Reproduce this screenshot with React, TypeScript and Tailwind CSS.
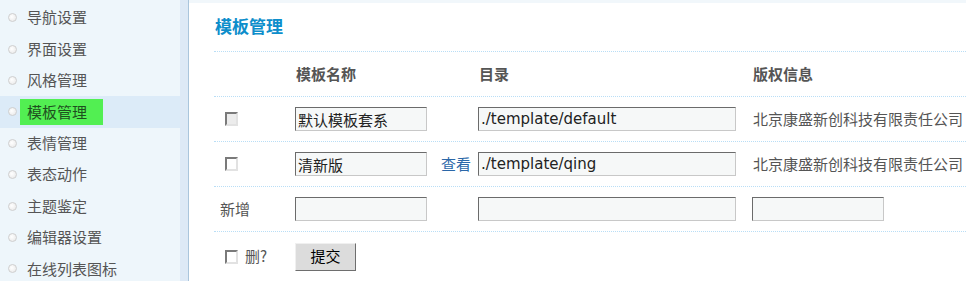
import React from 'react';

const menu = ['导航设置', '界面设置', '风格管理', '模板管理', '表情管理', '表态动作', '主题鉴定', '编辑器设置', '在线列表图标'];

const font = { fontFamily: '"Noto Sans CJK SC", "Liberation Sans", sans-serif' };

const inputCls =
  "h-[24px] bg-[#f6f8f8] border border-t-[#6b6b6b] border-l-[#6b6b6b] border-b-[#c8c8c8] border-r-[#c8c8c8] px-[2px] text-[15px] text-[#222] outline-none [font-family:'DejaVu_Sans','Noto_Sans_CJK_SC',sans-serif]";

const Check: React.FC<{ disabled?: boolean }> = ({ disabled }) => (
  <span
    className={`inline-block w-[13px] h-[14px] border-2 border-t-[#7a7a7a] border-l-[#7a7a7a] border-b-[#e2e2e2] border-r-[#e2e2e2] ${
      disabled ? 'bg-[#ececec]' : 'bg-white'
    }`}
  />
);

const row = 'col-span-5 grid grid-cols-subgrid items-center border-t border-dotted border-[#b9def6]';

const App: React.FC = () => {
  return (
    <div className="flex w-[966px] h-[281px] overflow-hidden bg-white" style={font}>
      <aside className="w-[180px] shrink-0 bg-[#eef6fb] pt-[2px]">
        {menu.map((m) => {
          const active = m === '模板管理';
          return (
            <div
              key={m}
              className={`h-[31.4px] flex items-center ${active ? 'bg-[#dcebf8]' : ''}`}
            >
              <span className="ml-[8px] w-[9px] h-[9px] rounded-full border border-[#cfcfcf] bg-[radial-gradient(circle_at_40%_40%,#ffffff,#e6e6e6)]" />
              {active ? (
                <span className="ml-[3px] h-[26px] w-[83px] bg-[#52ef52] text-[#1f4f1f] text-[15px] flex items-center pl-[7px]">
                  {m}
                </span>
              ) : (
                <span className="ml-[10px] text-[15px] text-[#555]">{m}</span>
              )}
            </div>
          );
        })}
      </aside>
      <div className="w-[9px] shrink-0 bg-[#dde9f6] border-r border-[#aac5dc]" />
      <main className="flex-1 flex flex-col">
        <div className="h-[3px] bg-[#f1f7fb]" />
        <div className="pl-[25px]">
          <h1 className="h-[48px] flex items-center text-[17px] font-bold text-[#0d8ecb] pl-[1px] pb-[2px]">模板管理</h1>
          <div className="grid grid-cols-[81px_146px_37px_274px_1fr] text-[15px] text-[#555]">
            <div className={`${row} h-[45px] font-bold`}>
              <div />
              <div className="pl-[1px]">模板名称</div>
              <div />
              <div className="pl-[1px]">目录</div>
              <div className="pl-[1px]">版权信息</div>
            </div>
            <div className={`${row} h-[45px]`}>
              <div className="pl-[11px] flex"><Check disabled /></div>
              <div><input className={`${inputCls} w-[132px]`} defaultValue="默认模板套系" /></div>
              <div />
              <div><input className={`${inputCls} w-[258px]`} defaultValue="./template/default" /></div>
              <div className="pl-[1px] whitespace-nowrap">北京康盛新创科技有限责任公司</div>
            </div>
            <div className={`${row} h-[45px]`}>
              <div className="pl-[11px] flex"><Check /></div>
              <div><input className={`${inputCls} w-[132px]`} defaultValue="清新版" /></div>
              <div><a className="text-[#2b67a8] cursor-pointer">查看</a></div>
              <div><input className={`${inputCls} w-[258px]`} defaultValue="./template/qing" /></div>
              <div className="pl-[1px] whitespace-nowrap">北京康盛新创科技有限责任公司</div>
            </div>
            <div className={`${row} h-[45px]`}>
              <div className="pl-[6px]">新增</div>
              <div><input className={`${inputCls} w-[132px]`} /></div>
              <div />
              <div><input className={`${inputCls} w-[258px]`} /></div>
              <div><input className={`${inputCls} w-[132px]`} /></div>
            </div>
            <div className={`${row} h-[50px]`}>
              <div className="pl-[11px] flex items-center gap-[7px]">
                <Check />
                <span>删?</span>
              </div>
              <div>
                <button className="w-[61px] h-[28px] bg-[#dcdcdc] border border-t-[#f0f0f0] border-l-[#f0f0f0] border-b-[#6e6e6e] border-r-[#6e6e6e] text-[15px] text-black">
                  提交
                </button>
              </div>
            </div>
          </div>
        </div>
      </main>
    </div>
  );
};

export default App;
